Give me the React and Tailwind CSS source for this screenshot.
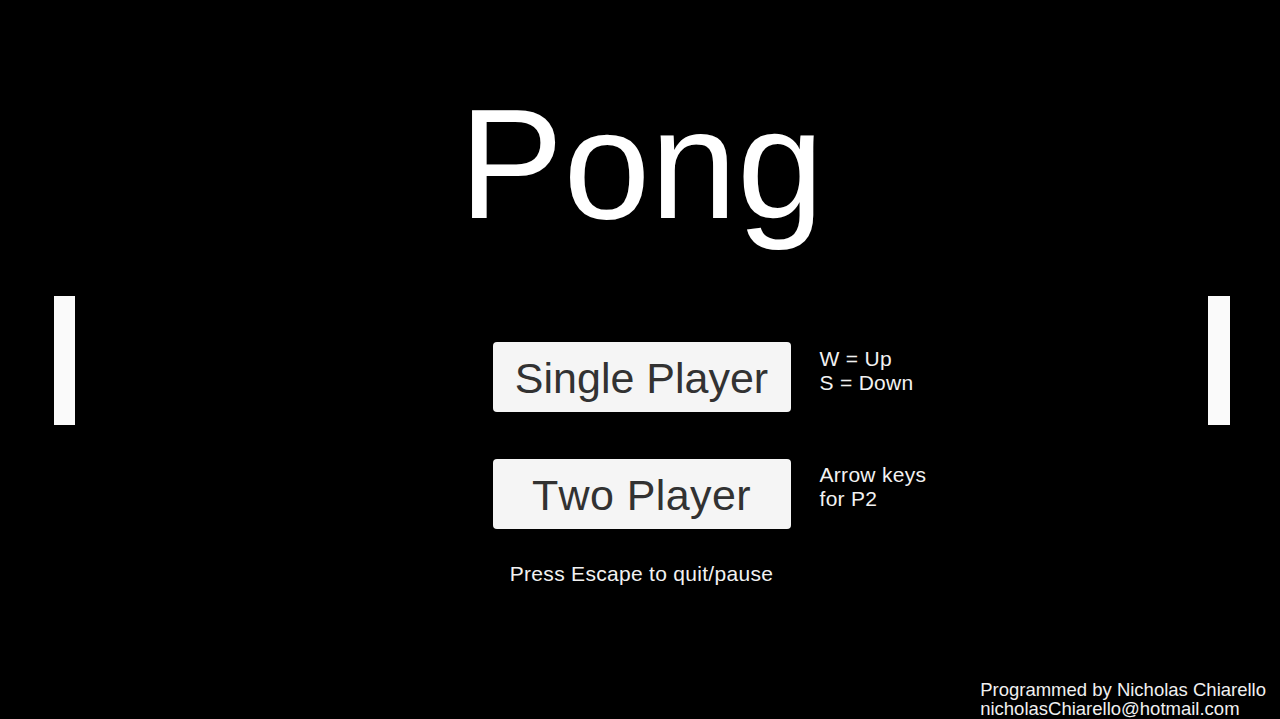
export default function App() {
  const font = { fontFamily: '"Liberation Sans", Arial, sans-serif' };
  return (
    <div
      className="grid h-[719px] w-[1280px] grid-cols-[54px_21px_1fr_22px_50px] grid-rows-[1fr_auto] overflow-hidden bg-black text-white [font-kerning:none]"
      style={font}
    >
      <div className="col-start-2 row-span-2 row-start-1 mt-[2px] h-[129px] self-center bg-[#fafafa]" />

      <div className="col-start-3 row-start-1 flex flex-col items-center">
        <h1 className="mt-[86px] text-[156px] leading-[156px] font-normal text-white">Pong</h1>

        <div className="mt-[100px] grid w-full grid-cols-[1fr_298px_1fr]">
          <div />
          <button className="flex h-[70px] items-center justify-center rounded-[4px] bg-[#f5f5f5] pt-[2px] text-[43px] leading-[48px] text-[#323232]">
            Single Player
          </button>
          <div className="pl-[29px] pt-[5px] text-[21px] leading-[24px] tracking-[0.3px] text-[#f2f2f2]">
            <div>W = Up</div>
            <div>S = Down</div>
          </div>
        </div>

        <div className="mt-[47px] grid w-full grid-cols-[1fr_298px_1fr]">
          <div />
          <button className="flex h-[70px] items-center justify-center rounded-[4px] bg-[#f5f5f5] pt-[2px] text-[43px] leading-[48px] tracking-[0.4px] text-[#323232]">
            Two Player
          </button>
          <div className="pl-[29px] pt-[4px] text-[21px] leading-[24px] tracking-[0.3px] text-[#f2f2f2]">
            <div>Arrow keys</div>
            <div>for P2</div>
          </div>
        </div>

        <p className="mt-[33px] text-[21px] leading-[24px] tracking-[0.3px] text-[#f2f2f2]">Press Escape to quit/pause</p>
      </div>

      <div className="col-start-4 row-span-2 row-start-1 mt-[2px] h-[129px] self-center bg-[#fafafa]" />

      <div className="col-span-3 col-start-3 row-start-2 justify-self-end pr-[14px] pb-[1px] text-[18.5px] leading-[19px] text-[#f0f0f0]">
        <div>Programmed by Nicholas Chiarello</div>
        <div>nicholasChiarello@hotmail.com</div>
      </div>
    </div>
  );
}
